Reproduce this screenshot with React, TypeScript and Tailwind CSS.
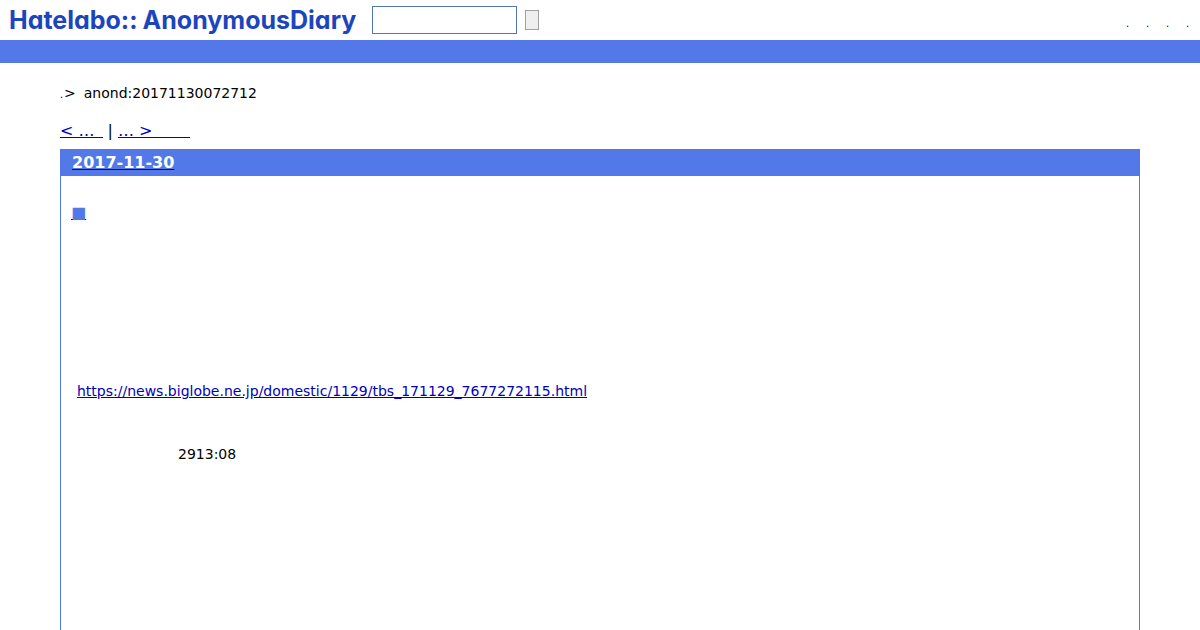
export default function App() {
  return (
    <div className="flex min-h-screen flex-col bg-white font-['DejaVu_Sans',sans-serif] text-sm text-black">
      <header>
        <div className="flex h-10 items-center pr-2.5 pl-[9px]">
          <a
            href="#home"
            className="flex gap-[5px] font-['Inter',sans-serif] text-[25px] leading-10 font-bold text-[#1c45bd] [font-feature-settings:'cv11']"
          >
            <span>Hatelabo::</span>
            <span>AnonymousDiary</span>
          </a>
          <form className="ml-4 flex items-center gap-2" onSubmit={(e) => e.preventDefault()}>
            <input
              type="text"
              aria-label="Search"
              className="h-7 w-[145px] border border-[#5279b5] bg-white px-1 outline-none"
            />
            <button
              type="submit"
              aria-label="Submit search"
              className="h-5 w-[14px] border border-[#a0a0a0] bg-[#efefef]"
            />
          </form>
          <nav aria-label="Site" className="ml-auto pt-2">
            <ul className="flex gap-4 text-[10px] leading-4">
              <li className="w-1">.</li>
              <li className="w-1">.</li>
              <li className="w-1">.</li>
              <li className="w-1">.</li>
            </ul>
          </nav>
        </div>
        <div className="h-[23px] bg-[#5279e7]" />
      </header>

      <main className="flex grow flex-col px-[60px] pt-5">
        <nav aria-label="Breadcrumb" className="flex h-5 items-center leading-5">
          <span className="w-1 pt-1 text-[10px]">.</span>
          <span>&gt;</span>
          <span className="ml-2">anond:20171130072712</span>
        </nav>

        <nav aria-label="Pages" className="mt-[22px] flex items-start text-base leading-3">
          <a href="#previous" className="border-b border-[#0000cc] pr-2 text-[#0000cc]">
            &lt; …
          </a>
          <span className="px-[5px]">|</span>
          <a href="#next" className="border-b border-[#0000cc] pr-[38px] text-[#0000cc]">
            … &gt;
          </a>
        </nav>

        <article className="mt-[11px] grow border-x border-[#5279e7]">
          <h2 className="bg-[#5279e7] px-[11px] text-base leading-[27px] font-bold text-white">
            <a href="#day" className="underline decoration-[#0000cc]">
              2017-11-30
            </a>
          </h2>
          <div className="px-4 pt-[25px]">
            <h3 className="-ml-1.5 text-base leading-6">
              <a href="#entry" className="text-[#5279e7] underline decoration-[#0000cc]">
                ■
              </a>
            </h3>
            <p className="mt-[156px] leading-5">
              <a
                href="https://news.biglobe.ne.jp/domestic/1129/tbs_171129_7677272115.html"
                className="text-[#0000bb] underline"
              >
                https://news.biglobe.ne.jp/domestic/1129/tbs_171129_7677272115.html
              </a>
            </p>
            <p className="mt-[43px] pl-[101px] leading-5">2913:08</p>
          </div>
        </article>
      </main>
    </div>
  );
}
